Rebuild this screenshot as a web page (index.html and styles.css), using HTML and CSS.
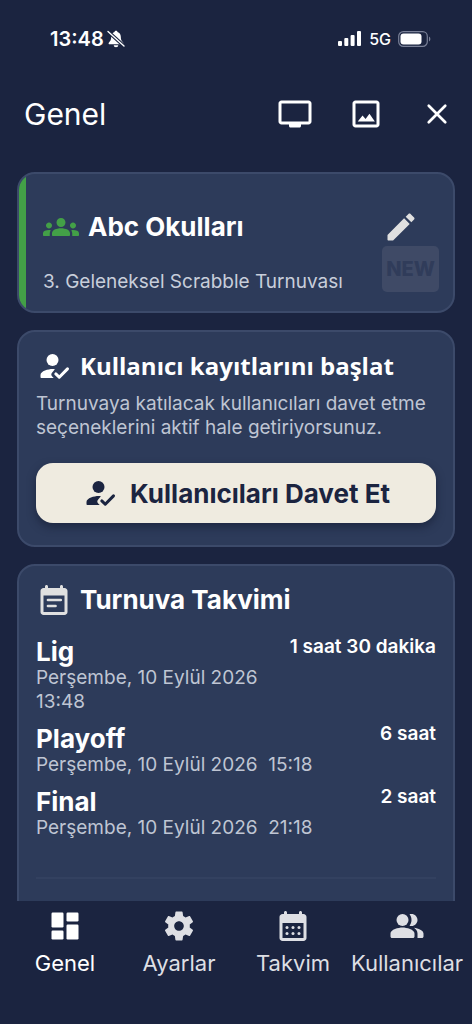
FILE: index.html
```html
<!DOCTYPE html>
<html lang="tr">
<head>
<meta charset="utf-8">
<meta name="viewport" content="width=device-width, initial-scale=1">
<title>Genel</title>
<link rel="stylesheet" href="styles.css">
</head>
<body>
<svg class="defs" aria-hidden="true">
  <symbol id="register" viewBox="0 0 24 24">
    <circle cx="11" cy="8" r="4"/>
    <path d="M12.6 14.1C12 14 11.5 14 11 14c-2.670 0-8 1.340-8 4v1.500c0 .3.2.5.5.5h8.300l-1-1c-.8-.8-.8-1.800 0-2.600z"/>
    <path d="M13.200 17.300l2.300 2.200 5.500-5.600" fill="none" stroke="currentColor" stroke-width="2" stroke-linecap="round" stroke-linejoin="round"/>
  </symbol>
</svg>
<div class="app">
  <div class="status">
    <div class="status-time">
      <span>13:48</span>
      <svg class="bell" viewBox="0 0 18 18" aria-hidden="true">
        <path fill="currentColor" d="M9 .8c-.8 0-1.400.5-1.500 1.200C5.300 2.700 4.200 4.600 4.200 6.800c0 3-.8 4.200-2.200 5.600-.8.8-.4 1.800.6 1.800h12.800c1 0 1.400-1 .6-1.800-1.400-1.400-2.200-2.600-2.200-5.600 0-2.200-1.100-4.100-3.300-4.800C10.400 1.300 9.800.8 9 .8zM6.700 15.200a2.300 2.100 0 0 0 4.600 0z"/>
        <path stroke="#1b2440" stroke-width="3.600" d="M1 1.500l16 14.500"/>
        <path stroke="currentColor" stroke-width="1.400" stroke-linecap="round" d="M1 1.500l16 14.500"/>
      </svg>
    </div>
    <div class="status-net">
      <svg class="signal" viewBox="0 0 24 16" fill="currentColor" aria-hidden="true"><rect x="0" y="10" width="4" height="5" rx="1"/><rect x="6.300" y="7" width="4" height="8" rx="1"/><rect x="12.600" y="4" width="4" height="11" rx="1"/><rect x="19" y="0" width="4" height="15" rx="1"/></svg>
      <span>5G</span>
      <svg class="battery" viewBox="0 0 33 16" aria-hidden="true"><rect x=".7" y=".7" width="28.600" height="14.600" rx="4.600" fill="none" stroke="#7a8198" stroke-width="1.200"/><rect x="2.500" y="2.500" width="21" height="11" rx="3" fill="#fff"/><path d="M31 5.500c1.800.8 1.800 4.200 0 5z" fill="#7a8198"/></svg>
    </div>
  </div>

  <header class="topbar">
    <h1>Genel</h1>
    <div class="actions">
      <button type="button" aria-label="Ekran"><svg class="icon" viewBox="0 0 24 24"><path d="M21 3H3c-1.100 0-2 .9-2 2v12c0 1.100.9 2 2 2h5v1c0 .55.45 1 1 1h6c.55 0 1-.45 1-1v-1h5c1.100 0 2-.9 2-2V5c0-1.100-.9-2-2-2zm0 14H3V5h18z"/></svg></button>
      <button type="button" aria-label="Resim"><svg class="icon" viewBox="0 0 24 24"><path d="M19 3H5c-1.100 0-2 .9-2 2v14c0 1.100.9 2 2 2h14c1.100 0 2-.9 2-2V5c0-1.100-.9-2-2-2zm0 16H5V5h14z"/><path d="M6.500 17l3.200-4 2 2.300 2.600-3.400 3.600 5.100z"/></svg></button>
      <button type="button" aria-label="Kapat"><svg class="icon" viewBox="0 0 24 24"><path d="M6.500 6.500l11 11M17.500 6.500l-11 11" stroke="currentColor" stroke-width="1.800" stroke-linecap="round"/></svg></button>
    </div>
  </header>

  <main class="content">
    <section class="card school">
      <div class="school-body">
        <div class="school-head">
          <svg class="icon green" viewBox="0 0 24 24" aria-hidden="true"><path d="M12 12.750c1.630 0 3.070.39 4.240.9 1.080.48 1.760 1.560 1.760 2.730v1.120c0 .28-.22.5-.5.5h-11a.5.5 0 0 1-.5-.5v-1.110c0-1.180.68-2.260 1.760-2.730 1.170-.52 2.610-.91 4.240-.91zM4 13c1.100 0 2-.9 2-2s-.9-2-2-2-2 .9-2 2 .9 2 2 2zm1.130 1.100C4.760 14.040 4.390 14 4 14c-.99 0-1.930.21-2.780.58C.48 14.900 0 15.620 0 16.430v1.070c0 .28.22.5.5.5h4v-1.610c0-.83.23-1.610.63-2.290zM20 13c1.100 0 2-.9 2-2s-.9-2-2-2-2 .9-2 2 .9 2 2 2zm4 3.430c0-.81-.48-1.530-1.220-1.850C21.930 14.210 20.990 14 20 14c-.39 0-.76.04-1.130.1.4.68.63 1.460.63 2.290V18h4c.28 0 .5-.22.5-.5zM12 6c1.660 0 3 1.340 3 3s-1.340 3-3 3-3-1.340-3-3 1.340-3 3-3z"/></svg>
          <h2>Abc Okulları</h2>
          <button type="button" class="edit" aria-label="Düzenle"><svg class="icon" viewBox="0 0 24 24"><path d="M3 17.460v3.040c0 .28.22.5.5.5h3.040c.13 0 .26-.05.35-.15L17.810 9.940l-3.750-3.750L3.150 17.100c-.1.1-.15.22-.15.36zM20.710 7.040c.39-.39.39-1.020 0-1.410l-2.340-2.340c-.39-.39-1.020-.39-1.410 0l-1.830 1.830 3.750 3.750 1.830-1.830z"/></svg></button>
        </div>
        <p class="school-sub">3. Geleneksel Scrabble Turnuvası</p>
      </div>
      <span class="new-badge">NEW</span>
    </section>

    <section class="card invite">
      <div class="card-head">
        <svg class="icon" aria-hidden="true"><use href="#register"/></svg>
        <h2 class="humanist">Kullanıcı kayıtlarını başlat</h2>
      </div>
      <p class="muted">Turnuvaya katılacak kullanıcıları davet etme seçeneklerini aktif hale getiriyorsunuz.</p>
      <button type="button" class="cta"><svg class="icon" aria-hidden="true"><use href="#register"/></svg>Kullanıcıları Davet Et</button>
    </section>

    <section class="card schedule">
      <div class="card-head">
        <svg class="icon soft" viewBox="0 0 24 24" aria-hidden="true"><path d="M19 4h-1V3c0-.55-.45-1-1-1s-1 .45-1 1v1H8V3c0-.55-.45-1-1-1s-1 .45-1 1v1H5c-1.100 0-2 .9-2 2v14c0 1.100.9 2 2 2h14c1.100 0 2-.9 2-2V6c0-1.100-.9-2-2-2zm0 16H5V9h14z"/><path d="M8 12h8.500M8 16h5" stroke="currentColor" stroke-width="1.800" stroke-linecap="round"/></svg>
        <h2>Turnuva Takvimi</h2>
      </div>
      <ul class="stages">
        <li><div class="stage"><h3>Lig</h3><p class="muted">Perşembe, 10 Eylül 2026  13:48</p></div><span class="length">1 saat 30 dakika</span></li>
        <li><div class="stage"><h3>Playoff</h3><p class="muted">Perşembe, 10 Eylül 2026  15:18</p></div><span class="length">6 saat</span></li>
        <li><div class="stage"><h3>Final</h3><p class="muted">Perşembe, 10 Eylül 2026  21:18</p></div><span class="length">2 saat</span></li>
      </ul>
      <hr>
    </section>
  </main>

  <nav class="tabs">
    <button type="button" class="active" aria-current="page"><svg class="icon" viewBox="0 0 24 24" aria-hidden="true"><rect x="3" y="3" width="8" height="10" rx=".8"/><rect x="3" y="15" width="8" height="6" rx=".8"/><rect x="13" y="3" width="8" height="6" rx=".8"/><rect x="13" y="11" width="8" height="10" rx=".8"/></svg>Genel</button>
    <button type="button"><svg class="icon" viewBox="0 0 24 24" aria-hidden="true"><path d="M19.140 12.940c.04-.3.06-.61.06-.94 0-.32-.02-.64-.07-.94l2.030-1.580c.18-.14.23-.41.12-.61l-1.920-3.320c-.12-.22-.37-.29-.59-.22l-2.390.96c-.5-.38-1.030-.7-1.620-.94l-.36-2.540c-.04-.24-.24-.41-.48-.41h-3.840c-.24 0-.43.17-.47.41l-.36 2.540c-.59.24-1.130.57-1.620.94l-2.390-.96c-.22-.08-.47 0-.59.22L2.740 8.870c-.12.21-.08.47.12.61l2.030 1.580c-.05.3-.09.63-.09.94s.02.64.07.94l-2.030 1.580c-.18.14-.23.41-.12.61l1.920 3.320c.12.22.37.29.59.22l2.390-.96c.5.38 1.030.7 1.620.94l.36 2.540c.05.24.24.41.48.41h3.840c.24 0 .44-.17.47-.41l.36-2.540c.59-.24 1.130-.56 1.620-.94l2.390.96c.22.08.47 0 .59-.22l1.920-3.320c.12-.22.07-.47-.12-.61zM12 15.200c-1.770 0-3.200-1.430-3.200-3.200s1.430-3.200 3.200-3.200 3.200 1.430 3.200 3.200-1.430 3.200-3.200 3.200z"/></svg>Ayarlar</button>
    <button type="button"><svg class="icon" viewBox="0 0 24 24" aria-hidden="true"><path d="M19 4h-1V3c0-.55-.45-1-1-1s-1 .45-1 1v1H8V3c0-.55-.45-1-1-1s-1 .45-1 1v1H5c-1.100 0-2 .9-2 2v14c0 1.100.9 2 2 2h14c1.100 0 2-.9 2-2V6c0-1.100-.9-2-2-2zm0 16H5V10h14z"/><circle cx="8" cy="13" r="1"/><circle cx="12" cy="13" r="1"/><circle cx="16" cy="13" r="1"/><circle cx="8" cy="17" r="1"/><circle cx="12" cy="17" r="1"/><circle cx="16" cy="17" r="1"/></svg>Takvim</button>
    <button type="button"><svg class="icon" viewBox="0 0 24 24" aria-hidden="true"><circle cx="9" cy="8" r="4"/><path d="M9 13c-2.670 0-8 1.340-8 4v2c0 .55.45 1 1 1h14c.55 0 1-.45 1-1v-2c0-2.660-5.330-4-8-4zM15 12c2.210 0 4-1.790 4-4s-1.790-4-4-4c-.47 0-.91.1-1.330.24C14.500 5.270 15 6.580 15 8s-.5 2.730-1.330 3.760c.42.14.86.24 1.330.24zM16.670 13.130C18.040 14.060 19 15.320 19 17v3h3c.55 0 1-.45 1-1v-2c0-2.180-3.570-3.470-6.330-3.870z"/></svg>Kullanıcılar</button>
  </nav>
</div>
</body>
</html>
```

FILE: styles.css
```css
* { box-sizing: border-box; }

body {
  margin: 0;
  background: #1b2440;
  color: #fff;
  font-family: Inter, "Liberation Sans", sans-serif;
}

h1, h2, h3, p, ul { margin: 0; padding: 0; }

button {
  border: 0;
  padding: 0;
  background: none;
  color: inherit;
  font: inherit;
}

.defs { position: absolute; width: 0; height: 0; }

.icon {
  display: block;
  flex: none;
  width: 36px;
  height: 36px;
  fill: currentColor;
}

.app {
  display: flex;
  flex-direction: column;
  height: 100vh;
}

.status {
  display: flex;
  justify-content: space-between;
  align-items: center;
  padding: 27px 41px 0 50px;
  line-height: 24px;
}

.status-time, .status-net { display: flex; align-items: center; }
.status-time { gap: 3px; font-size: 20px; font-weight: 600; }
.status-net { gap: 7px; font-size: 16px; font-weight: 500; }
.bell { width: 18px; height: 18px; }
.signal { width: 24px; height: 16px; }
.battery { width: 33px; height: 16px; }

.topbar {
  display: flex;
  justify-content: space-between;
  align-items: center;
  padding: 45px 17px 40px 24px;
}

.topbar h1 { font-size: 30px; font-weight: 400; line-height: 36px; }
.actions { display: flex; gap: 35px; }

.content {
  flex: 1;
  min-height: 0;
  overflow: hidden;
  display: flex;
  flex-direction: column;
  gap: 17px;
  padding: 0 17px;
}

.card {
  flex: none;
  border: 2px solid #3c4a6a;
  border-radius: 18px;
  background: #2d3b5a;
}

.school {
  position: relative;
  display: flex;
  overflow: hidden;
}

.school::before { content: ""; width: 7px; background: #43a047; }

.school-body { flex: 1; padding: 35px 34px 17px 17px; }
.school-head { display: flex; align-items: center; gap: 9px; }
.green { color: #43a047; }

h2 { font-size: 26px; font-weight: 700; line-height: 36px; }
.edit { margin-left: auto; color: #e0e0e0; }

.school-sub {
  margin-top: 25px;
  color: #c8cedb;
  font-size: 19px;
  line-height: 24px;
}

.new-badge {
  position: absolute;
  right: 14px;
  bottom: 19px;
  width: 57px;
  height: 46px;
  border-radius: 5px;
  background: #3f4a66;
  color: #303c5a;
  font-size: 20px;
  font-weight: 800;
  line-height: 46px;
  text-align: center;
}

.card-head { display: flex; align-items: center; gap: 8px; }
.humanist { font-family: "Open Sans", "Noto Sans", sans-serif; font-size: 24px; }
.soft { color: #e0e0e0; }

.muted {
  color: #bfc5d3;
  font-size: 19px;
  line-height: 24px;
  white-space: pre-wrap;
}

.invite { padding: 16px 17px 22px; }
.invite .muted { margin-top: 8px; }

.cta {
  display: flex;
  justify-content: center;
  align-items: center;
  gap: 12px;
  width: 100%;
  height: 60px;
  margin-top: 23px;
  border-radius: 17px;
  background: #efebe0;
  box-shadow: 0 4px 8px rgba(15, 22, 42, 0.5);
  color: #1b2440;
  font-size: 26px;
  font-weight: 700;
}

.schedule { padding: 16px 17px 40px; }

.stages {
  display: flex;
  flex-direction: column;
  gap: 11px;
  margin-top: 20px;
  list-style: none;
}

.stages li { display: flex; align-items: flex-start; gap: 8px; }
.stage { flex: 1; }
h3 { font-size: 26px; font-weight: 700; line-height: 28px; }
.length { font-size: 19px; font-weight: 600; line-height: 18px; }

hr {
  margin: 37px 0 0;
  border: 0;
  border-top: 2px solid #334160;
}

.tabs {
  flex: none;
  display: grid;
  grid-template-columns: repeat(4, 1fr);
  padding: 7px 8px 46px;
}

.tabs button {
  display: flex;
  flex-direction: column;
  align-items: center;
  gap: 5px;
  color: #dedfe4;
  font-size: 22px;
  line-height: 29px;
}

.tabs .active { color: #fff; }
```
